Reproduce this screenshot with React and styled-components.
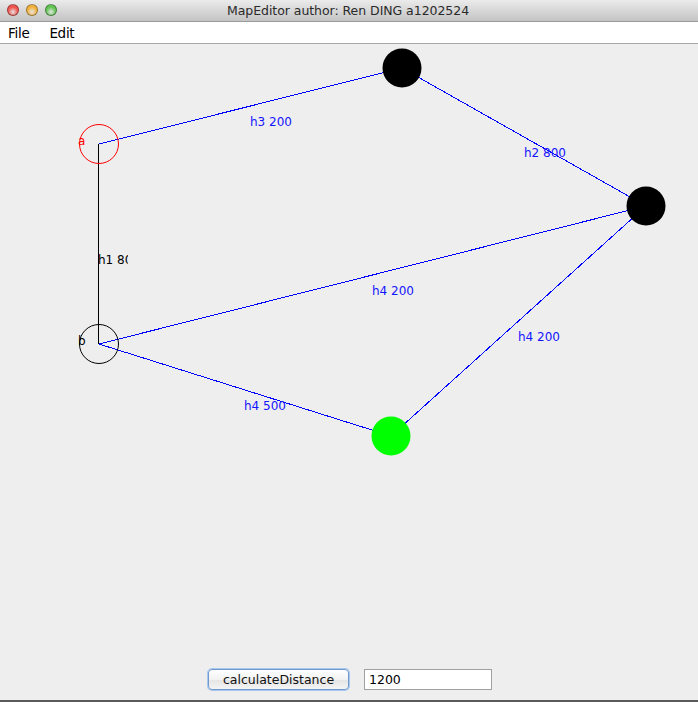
import React from "react"
import styled, { createGlobalStyle } from "styled-components"

const nodes = [
  { id: "a", x: 99, y: 144, label: "a", color: "#ff0000", filled: false },
  { id: "b", x: 99, y: 344, label: "b", color: "#000000", filled: false },
  { id: "top", x: 402, y: 68, color: "#000000", filled: true },
  { id: "right", x: 646, y: 206, color: "#000000", filled: true },
  { id: "green", x: 391, y: 436, color: "#00ff00", filled: true },
]

const edges = [
  { from: "a", to: "b", color: "#000000", label: "h1 80", lx: 98, ly: 264, clip: 128 },
  { from: "a", to: "top", color: "#0000ff", label: "h3 200", lx: 250, ly: 126 },
  { from: "top", to: "right", color: "#0000ff", label: "h2 800", lx: 524, ly: 157 },
  { from: "b", to: "right", color: "#0000ff", label: "h4 200", lx: 372, ly: 295 },
  { from: "right", to: "green", color: "#0000ff", label: "h4 200", lx: 518, ly: 341 },
  { from: "b", to: "green", color: "#0000ff", label: "h4 500", lx: 244, ly: 410 },
]

const byId = Object.fromEntries(nodes.map(n => [n.id, n]))

export default () => (
  <>
    <GlobalStyle />
    <Window>
      <TitleBar>
        <Lights>
          <Light color="#f0564f" />
          <Light color="#f2b33e" />
          <Light color="#63c554" />
        </Lights>
        <Title>MapEditor author: Ren DING a1202524</Title>
      </TitleBar>
      <MenuBar>
        <MenuItem>File</MenuItem>
        <MenuItem>Edit</MenuItem>
      </MenuBar>
      <Canvas>
        <Map viewBox="0 44 698 620" width="698" height="620">
          <defs>
            <clipPath id="h1clip">
              <rect x="0" y="0" width="128" height="702" />
            </clipPath>
          </defs>
          {edges.map((e, i) => {
            const a = byId[e.from]
            const b = byId[e.to]
            const off = a.x === b.x ? 0.5 : 0
            return (
              <line
                key={i}
                x1={a.x - off}
                y1={a.y}
                x2={b.x - off}
                y2={b.y}
                stroke={e.color}
                strokeWidth="1"
                shapeRendering="crispEdges"
              />
            )
          })}
          {nodes.map(n =>
            n.filled ? (
              <circle key={n.id} cx={n.x} cy={n.y} r="19.5" fill={n.color} />
            ) : (
              <circle key={n.id} cx={n.x} cy={n.y} r="19.5" fill="none" stroke={n.color} />
            )
          )}
          {nodes
            .filter(n => n.label)
            .map(n => (
              <EdgeLabel key={n.id} x={78} y={n.y + 1} fill={n.color}>
                {n.label}
              </EdgeLabel>
            ))}
          {edges.map((e, i) => (
            <EdgeLabel
              key={i}
              x={e.lx}
              y={e.ly}
              fill={e.color === "#0000ff" ? "#1414ff" : "#000"}
              clipPath={e.clip ? "url(#h1clip)" : undefined}
            >
              {e.label}
            </EdgeLabel>
          ))}
        </Map>
      </Canvas>
      <Controls>
        <Button>calculateDistance</Button>
        <Field defaultValue="1200" />
      </Controls>
    </Window>
  </>
)

const GlobalStyle = createGlobalStyle`
  html, body {
    margin: 0;
    padding: 0;
    background: #eeeeee;
  }
  body {
    font-family: "DejaVu Sans", "Liberation Sans", sans-serif;
  }
`

const Window = styled.div`
  width: 698px;
  height: 702px;
  display: flex;
  flex-direction: column;
  background: #eeeeee;
  overflow: hidden;
`

const TitleBar = styled.div`
  height: 22px;
  flex: none;
  position: relative;
  display: flex;
  align-items: center;
  justify-content: center;
  background: linear-gradient(#ebebeb, #d3d3d3 60%, #c4c4c4);
  border-bottom: 1px solid #9a9a9a;
  box-sizing: border-box;
`

const Lights = styled.div`
  position: absolute;
  left: 7px;
  top: 4px;
  display: flex;
  gap: 7px;
`

const Light = styled.span`
  width: 12px;
  height: 12px;
  border-radius: 50%;
  box-sizing: border-box;
  border: 1px solid rgba(0, 0, 0, 0.35);
  background: radial-gradient(circle at 50% 70%, #fff6 0, ${p => p.color} 55%);
`

const Title = styled.div`
  font-size: 12.5px;
  color: #2a2a2a;
  letter-spacing: -0.05px;
  margin-left: -2px;
`

const MenuBar = styled.div`
  height: 21px;
  flex: none;
  display: flex;
  align-items: center;
  gap: 20px;
  padding-left: 8px;
  background: #ffffff;
  border-bottom: 1px solid #a8a8a8;
`

const MenuItem = styled.span`
  font-size: 13.5px;
  color: #000;
  letter-spacing: -0.3px;
`

const Canvas = styled.div`
  height: 620px;
  flex: none;
`

const Map = styled.svg`
  display: block;
`

const EdgeLabel = styled.text`
  font-family: "DejaVu Sans", sans-serif;
  font-size: 12px;
`

const Controls = styled.div`
  flex: 1;
  display: flex;
  justify-content: center;
  align-items: flex-start;
  gap: 15px;
  padding-top: 5px;
  padding-left: 2px;
  border-bottom: 2px solid #5a5a5a;
`

const Button = styled.button`
  width: 141px;
  height: 21px;
  padding: 0;
  font-family: "DejaVu Sans", sans-serif;
  font-size: 12.5px;
  color: #111;
  background: linear-gradient(#ffffff, #f2f2f2 50%, #e4e4e4 51%, #f4f4f4);
  border: 1px solid #6f9ad0;
  border-radius: 4px;
  box-shadow: 0 0 0 1px #a9c6ec;
`

const Field = styled.input`
  width: 128px;
  height: 21px;
  box-sizing: border-box;
  padding: 0 4px;
  font-family: "DejaVu Sans", sans-serif;
  font-size: 12.5px;
  color: #000;
  background: #fff;
  border: 1px solid #a0a0a0;
  outline: none;
`
